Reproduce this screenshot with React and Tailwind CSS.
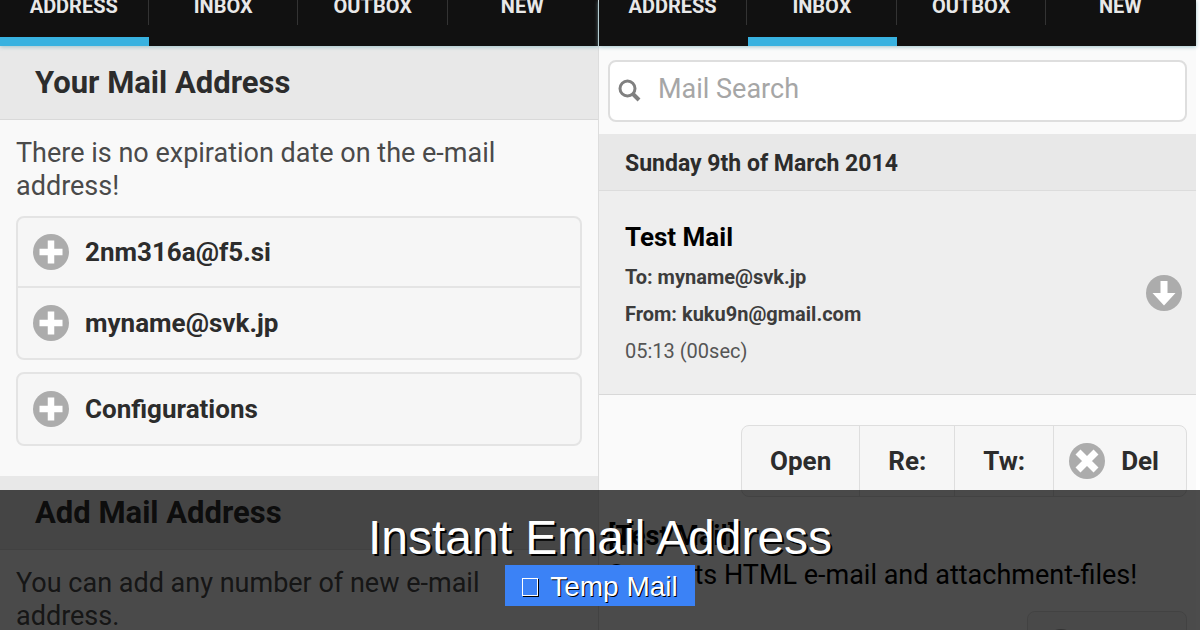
import clsx from 'clsx'

const TABS = ['ADDRESS', 'INBOX', 'OUTBOX', 'NEW']

const ADDRESSES = ['2nm316a@f5.si', 'myname@svk.jp']

function CircleIcon({ children }) {
  return (
    <svg viewBox="0 0 36 36" className="size-9 shrink-0" aria-hidden="true">
      <circle cx="18" cy="18" r="18" fill="#acacac" />
      {children}
    </svg>
  )
}

function PlusIcon() {
  return (
    <CircleIcon>
      <path d="M18 6.5v23M6.5 18h23" stroke="#fff" strokeWidth="6.5" />
    </CircleIcon>
  )
}

function DeleteIcon() {
  return (
    <CircleIcon>
      <path d="M9 9l18 18M27 9l-18 18" stroke="#fff" strokeWidth="7" />
    </CircleIcon>
  )
}

function DownIcon() {
  return (
    <CircleIcon>
      <path d="M14.5 6h7v12h8L18 30.5 6.5 18h8z" fill="#fff" />
    </CircleIcon>
  )
}

function SearchIcon() {
  return (
    <svg viewBox="0 0 24 24" className="size-6 shrink-0" fill="none" stroke="#808080" aria-hidden="true">
      <circle cx="9.5" cy="9.5" r="7.5" strokeWidth="3" />
      <path d="M15 15l6 6" strokeWidth="4" />
    </svg>
  )
}

function TabBar({ active }) {
  return (
    <nav className="relative grid grid-cols-4 bg-[#111] shadow-[0_1px_4px_#9fc4cc]">
      {TABS.map((tab, i) => (
        <button
          key={tab}
          className={clsx(
            'mr-px flex h-[46px] flex-col border-b-9 text-xl leading-3 font-bold text-[#e8e8e8]',
            tab === active ? 'border-[#38b2e0]' : 'border-[#111]'
          )}
        >
          <span className={clsx('h-[25px] w-full border-r', i < TABS.length - 1 ? 'border-[#333]' : 'border-transparent')}>
            {tab}
          </span>
        </button>
      ))}
    </nav>
  )
}

function SectionTitle({ children }) {
  return (
    <h2 className="border-b border-[#d9d9d9] bg-[#e8e8e8] px-[35px] pt-[19px] pb-[18px] text-[31px] leading-9 font-bold">
      {children}
    </h2>
  )
}

function ListButton({ children }) {
  return (
    <button className="flex h-[70px] w-full items-center gap-4 px-[15px] text-left text-[26px] font-bold">
      <PlusIcon />
      {children}
    </button>
  )
}

function AddressPanel() {
  return (
    <section className="bg-[#f9f9f9] text-[#2c2c2c]">
      <TabBar active="ADDRESS" />
      <SectionTitle>Your Mail Address</SectionTitle>
      <div className="px-4 pt-[17px] pb-[30px]">
        <p className="mb-[13px] text-[27px] leading-[33px] text-[#4a4a4a]">
          There is no expiration date on the e-mail address!
        </p>
        <div className="divide-y-2 divide-[#e4e4e4] rounded-lg border-2 border-[#e4e4e4] bg-[#f6f6f6]">
          {ADDRESSES.map(address => (
            <ListButton key={address}>{address}</ListButton>
          ))}
        </div>
        <div className="mt-3 rounded-lg border-2 border-[#e4e4e4] bg-[#f6f6f6]">
          <ListButton>Configurations</ListButton>
        </div>
      </div>
      <SectionTitle>Add Mail Address</SectionTitle>
      <p className="px-4 pt-[17px] text-[27px] leading-[33px] text-[#4a4a4a]">
        You can add any number of new e-mail address.
      </p>
    </section>
  )
}

function InboxPanel() {
  return (
    <section className="border-l border-[#ddd] bg-[#fafafa] text-[#2c2c2c]">
      <TabBar active="INBOX" />
      <div className="px-[9px] pt-[14px] pb-3">
        <label className="flex h-[62px] items-center gap-4 rounded-lg border-2 border-[#dedede] bg-white px-2">
          <SearchIcon />
          <input
            type="search"
            aria-label="Mail Search"
            placeholder="Mail Search"
            className="w-full pb-1 text-[27px] leading-9 outline-none placeholder:text-[#a6a6a6]"
          />
        </label>
      </div>
      <h3 className="border-b border-[#dcdcdc] bg-[#e8e8e8] px-[26px] pt-[14px] pb-[10px] text-[23px] leading-8 font-bold">
        Sunday 9th of March 2014
      </h3>
      <article className="flex items-center justify-between border-b border-[#d8d8d8] bg-[#eee] pt-7 pr-[14px] pb-6 pl-[26px]">
        <div className="text-xl leading-[37px] font-bold text-[#3c3c3c]">
          <h4 className="mb-1 text-[26px] leading-9 text-black">Test Mail</h4>
          <p>To: myname@svk.jp</p>
          <p>From: kuku9n@gmail.com</p>
          <p className="font-normal text-[#555]">05:13 (00sec)</p>
        </div>
        <button aria-label="Show mail" className="pb-1">
          <DownIcon />
        </button>
      </article>
      <div className="flex flex-col px-[9px] pt-[30px]">
        <div className="flex h-[72px] divide-x divide-[#dedede] self-end rounded-lg border border-[#dedede] bg-[#f6f6f6] text-[26px] font-bold">
          <button className="px-7">Open</button>
          <button className="px-7">Re:</button>
          <button className="px-7">Tw:</button>
          <button className="flex items-center gap-4 pr-[27px] pl-[15px]">
            <DeleteIcon />
            Del
          </button>
        </div>
        <div className="pt-5 text-[27px] leading-[39px] text-black">
          <p className="font-bold">[Test Mail]</p>
          <p>Supports HTML e-mail and attachment-files!</p>
        </div>
        <button aria-label="Delete" className="mt-4 flex h-[72px] w-40 items-center self-end rounded-lg border border-[#dedede] bg-[#f6f6f6] px-[15px]">
          <DeleteIcon />
        </button>
      </div>
    </section>
  )
}

export default function App() {
  return (
    <main className="relative h-screen overflow-hidden bg-white font-[Roboto,sans-serif]">
      <div className="grid h-full grid-cols-2 pr-1">
        <AddressPanel />
        <InboxPanel />
      </div>
      <div className="absolute inset-x-0 bottom-0 flex h-[140px] flex-col items-center bg-black/70 pt-5 font-['Liberation_Sans',sans-serif] text-white">
        <h1 className="text-5xl leading-[55px] text-shadow-[2px_2px_0_#000]">Instant Email Address</h1>
        <a href="#" className="flex h-[41px] items-center gap-3 bg-[#3b82f6] px-[17px] pt-0.5 text-[28px] text-shadow-[1px_1px_0_#000]">
          <span className="h-[18px] w-4 border border-white shadow-[1px_1px_0_#000]" />
          Temp Mail
        </a>
      </div>
    </main>
  )
}
